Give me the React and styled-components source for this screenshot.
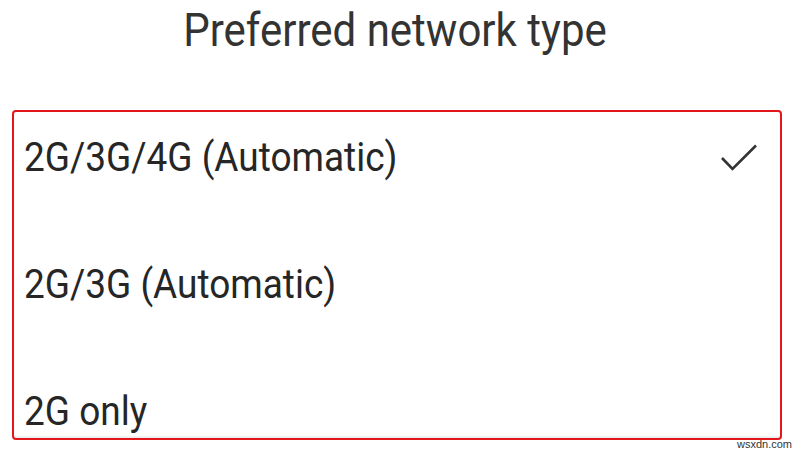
import React from 'react'
import styled, { createGlobalStyle } from 'styled-components'

const GlobalStyle = createGlobalStyle`
  html, body {
    margin: 0;
    padding: 0;
    background: #fff;
  }

  body {
    font-family: Roboto, 'Liberation Sans', sans-serif;
    color: #2b2b2b;
  }
`

const Page = styled.div`
  width: 800px;
  height: 452px;
  overflow: hidden;
  position: relative;
  background: #fff;
`

const Title = styled.h1`
  margin: 0;
  height: 110px;
  padding: 6px 10px 0 0;
  box-sizing: border-box;
  text-align: center;
  font-size: 42px;
  font-weight: 400;
  line-height: 50px;
  color: #333;

  span {
    display: inline-block;
    transform: scaleY(1.1);
  }
`

const Options = styled.div`
  margin: 0 18px 0 12px;
  height: 330px;
  box-sizing: border-box;
  border: 2px solid #e3161c;
  border-radius: 4px;
  overflow: hidden;
  box-shadow: inset 0 -3px 3px -2px rgba(0, 0, 0, 0.12);
`

const Option = styled.div`
  height: 127px;
  box-sizing: border-box;
  padding: 24px 20px 0 10px;
  display: flex;
  align-items: flex-start;
  justify-content: space-between;
  font-size: 37px;
  line-height: 44px;
  color: #262626;
`

const Label = styled.span`
  display: inline-block;
  transform: scaleY(1.12);
`

const Check = styled.svg`
  width: 44px;
  height: 44px;
`

const Watermark = styled.span`
  position: absolute;
  right: 8px;
  bottom: 2px;
  font-family: 'Liberation Sans', Arial, sans-serif;
  font-size: 11px;
  color: #333;
`

const options = [
  { label: '2G/3G/4G (Automatic)', selected: true },
  { label: '2G/3G (Automatic)' },
  { label: '2G only' }
]

const App = () => (
  <Page>
    <GlobalStyle />
    <Title><span>Preferred network type</span></Title>
    <Options>
      {options.map(({ label, selected }) => (
        <Option key={label}>
          <Label>{label}</Label>
          {selected && (
            <Check viewBox='0 0 44 44'>
              <path
                d='M6 22 L16.5 33 L40 9.5'
                fill='none'
                stroke='#333'
                strokeWidth='2.6'
              />
            </Check>
          )}
        </Option>
      ))}
    </Options>
    <Watermark>wsxdn.com</Watermark>
  </Page>
)

export default App
